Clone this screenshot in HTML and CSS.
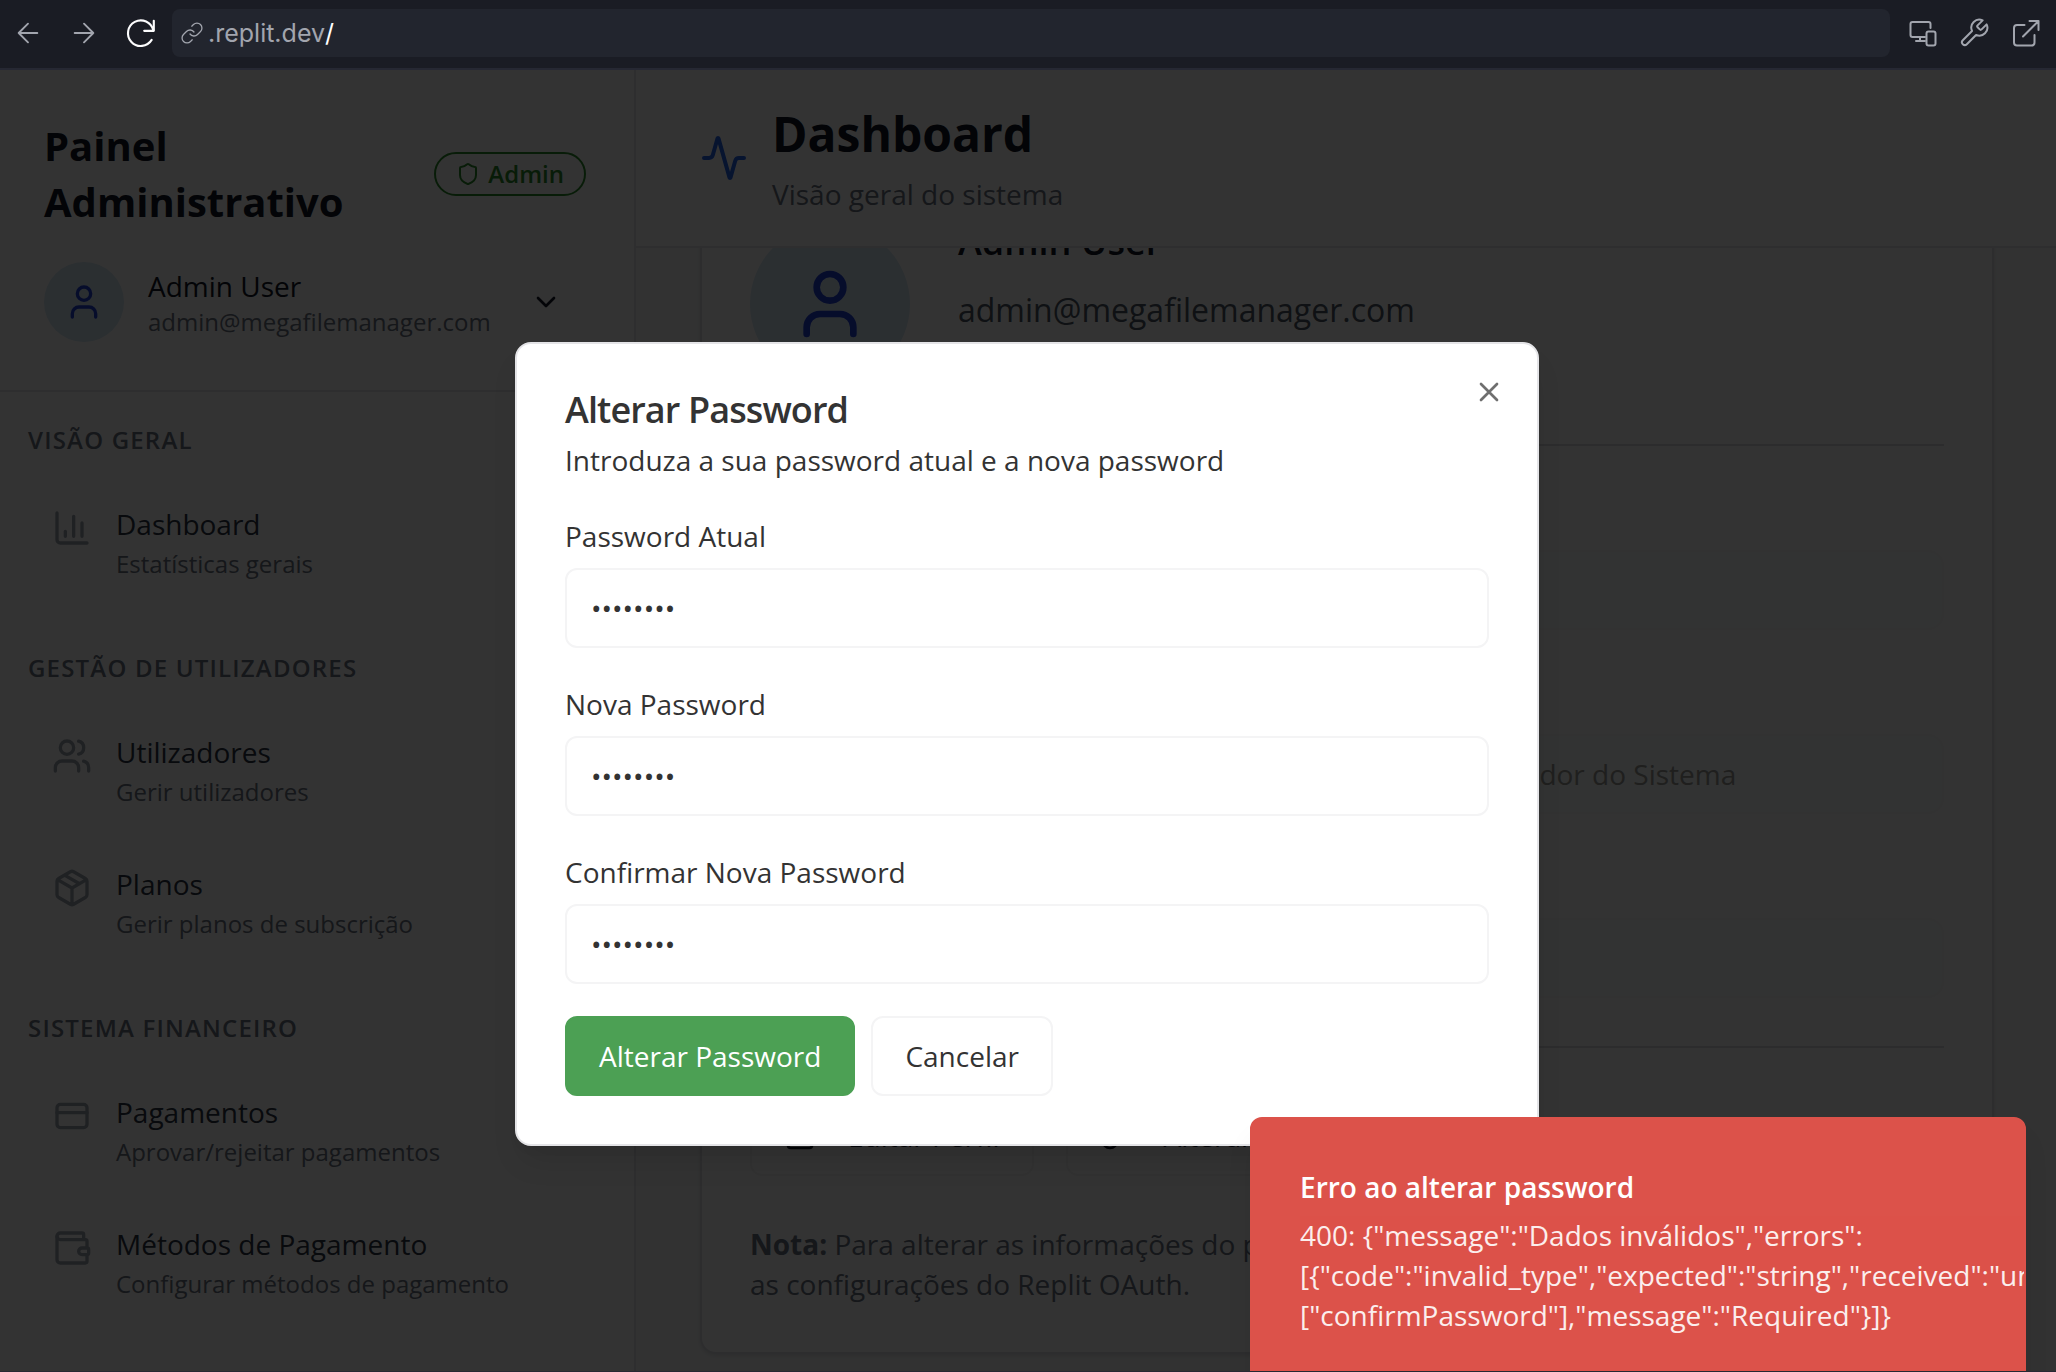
FILE: index.html
```html
<!DOCTYPE html>
<html lang="pt">
<head>
<meta charset="utf-8">
<title>Painel Administrativo</title>
<link rel="stylesheet" href="styles.css">
</head>
<body>
<div class="browser">
  <div class="toolbar">
    <button class="tool" aria-label="Voltar"><svg viewBox="0 0 24 24" class="tool-icon"><path d="M20 12H4M12 4l-8 8 8 8"/></svg></button>
    <button class="tool" aria-label="Avançar"><svg viewBox="0 0 24 24" class="tool-icon"><path d="M4 12h16M12 4l8 8-8 8"/></svg></button>
    <button class="tool tool-reload" aria-label="Recarregar"><svg viewBox="0 0 30 30" class="tool-icon reload-icon"><path d="M27 3.500v9.500h-9"/><path d="M26.500 12.500A12 12 0 1 0 25 21.500"/></svg></button>
    <label class="address">
      <svg viewBox="0 0 24 24" class="link-icon"><path d="M10 13a5 5 0 0 0 7.540.540l3-3a5 5 0 0 0-7.070-7.070l-1.720 1.710"/><path d="M14 11a5 5 0 0 0-7.540-.540l-3 3a5 5 0 0 0 7.070 7.070l1.710-1.710"/></svg>
      <span class="host">.replit.dev</span>
      <input class="path" type="text" value="/" aria-label="Caminho">
    </label>
    <div class="tools-end">
      <button class="tool" aria-label="Dispositivos"><svg viewBox="0 0 32 32" class="tool-icon end-icon"><path d="M24.500 11V7a2 2 0 0 0-2-2h-16a2 2 0 0 0-2 2v11a2 2 0 0 0 2 2h12.500M14 20v4M10 24h9"/><rect x="20.500" y="14.500" width="9" height="14" rx="2"/></svg></button>
      <button class="tool" aria-label="Ferramentas"><svg viewBox="0 0 24 24" class="tool-icon end-icon wrench"><path d="M14.700 6.300a1 1 0 0 0 0 1.400l1.600 1.600a1 1 0 0 0 1.400 0l3.770-3.770a6 6 0 0 1-7.940 7.940l-6.910 6.910a2.120 2.120 0 0 1-3-3l6.910-6.910a6 6 0 0 1 7.940-7.940l-3.760 3.760z"/></svg></button>
      <button class="tool" aria-label="Abrir em nova aba"><svg viewBox="0 0 32 32" class="tool-icon end-icon"><path d="M14.500 8H7a3 3 0 0 0-3 3v14.500a3 3 0 0 0 3 3h14.500a3 3 0 0 0 3-3V18M13 19.500 28.500 4M19.500 4h9v9"/></svg></button>
    </div>
  </div>

  <div class="preview">
    <aside class="sidebar">
      <header class="side-head">
        <div class="brand">
          <h2 class="brand-name">Painel Administrativo</h2>
          <span class="badge"><svg viewBox="0 0 24 24" class="badge-icon"><path d="M20 13c0 5-3.500 7.500-7.660 8.950a1 1 0 0 1-.670-.010C7.500 20.500 4 18 4 13V6a1 1 0 0 1 1-1c2 0 4.500-1.200 6.240-2.720a1.170 1.170 0 0 1 1.520 0C14.510 3.810 17 5 19 5a1 1 0 0 1 1 1z"/></svg>Admin</span>
        </div>
        <button class="account">
          <span class="avatar"><svg viewBox="0 0 24 24" class="avatar-icon"><path d="M19 21v-2a4 4 0 0 0-4-4H9a4 4 0 0 0-4 4v2"/><circle cx="12" cy="7" r="4"/></svg></span>
          <span class="account-text"><span class="account-name">Admin User</span><span class="account-mail">admin@megafilemanager.com</span></span>
          <svg viewBox="0 0 24 24" class="chevron"><path d="m6 9 6 6 6-6"/></svg>
        </button>
      </header>
      <nav class="nav">
        <section class="nav-group">
          <h3 class="nav-label">VISÃO GERAL</h3>
          <a class="nav-item" href="#dashboard">
            <svg viewBox="0 0 24 24" class="nav-icon"><path d="M3 3v16a2 2 0 0 0 2 2h16M18 17V9M13 17V5M8 17v-3"/></svg>
            <span class="nav-text"><span class="nav-title">Dashboard</span><span class="nav-sub">Estatísticas gerais</span></span>
          </a>
        </section>
        <section class="nav-group">
          <h3 class="nav-label">GESTÃO DE UTILIZADORES</h3>
          <a class="nav-item" href="#utilizadores">
            <svg viewBox="0 0 24 24" class="nav-icon"><path d="M16 21v-2a4 4 0 0 0-4-4H6a4 4 0 0 0-4 4v2"/><circle cx="9" cy="7" r="4"/><path d="M22 21v-2a4 4 0 0 0-3-3.870M16 3.130a4 4 0 0 1 0 7.750"/></svg>
            <span class="nav-text"><span class="nav-title">Utilizadores</span><span class="nav-sub">Gerir utilizadores</span></span>
          </a>
          <a class="nav-item" href="#planos">
            <svg viewBox="0 0 24 24" class="nav-icon"><path d="M11 21.730a2 2 0 0 0 2 0l7-4A2 2 0 0 0 21 16V8a2 2 0 0 0-1-1.730l-7-4a2 2 0 0 0-2 0l-7 4A2 2 0 0 0 3 8v8a2 2 0 0 0 1 1.730zM12 22V12M3.300 7 12 12l8.700-5M7.500 4.270l9 5.150"/></svg>
            <span class="nav-text"><span class="nav-title">Planos</span><span class="nav-sub">Gerir planos de subscrição</span></span>
          </a>
        </section>
        <section class="nav-group">
          <h3 class="nav-label">SISTEMA FINANCEIRO</h3>
          <a class="nav-item" href="#pagamentos">
            <svg viewBox="0 0 24 24" class="nav-icon"><rect x="3" y="5" width="18" height="14" rx="2"/><path d="M3 10h18"/></svg>
            <span class="nav-text"><span class="nav-title">Pagamentos</span><span class="nav-sub">Aprovar/rejeitar pagamentos</span></span>
          </a>
          <a class="nav-item" href="#metodos">
            <svg viewBox="0 0 24 24" class="nav-icon"><path d="M19 7V4a1 1 0 0 0-1-1H5a2 2 0 0 0 0 4h15a1 1 0 0 1 1 1v4h-3a2 2 0 0 0 0 4h3a1 1 0 0 0 1-1v-2a1 1 0 0 0-1-1"/><path d="M3 5v14a2 2 0 0 0 2 2h15a1 1 0 0 0 1-1v-4"/></svg>
            <span class="nav-text"><span class="nav-title">Métodos de Pagamento</span><span class="nav-sub">Configurar métodos de pagamento</span></span>
          </a>
        </section>
      </nav>
    </aside>

    <main class="main">
      <header class="page-head">
        <svg viewBox="0 0 24 24" class="page-icon"><path d="M22 12h-2.480a2 2 0 0 0-1.930 1.460l-2.350 8.360a.250.250 0 0 1-.480 0L9.240 2.180a.250.250 0 0 0-.480 0l-2.350 8.360A2 2 0 0 1 4.490 12H2"/></svg>
        <div>
          <h1 class="page-title">Dashboard</h1>
          <p class="page-sub">Visão geral do sistema</p>
        </div>
      </header>
      <div class="content">
        <section class="card">
          <div class="profile">
            <span class="avatar avatar-large"><svg viewBox="0 0 24 24" class="avatar-icon"><path d="M19 21v-2a4 4 0 0 0-4-4H9a4 4 0 0 0-4 4v2"/><circle cx="12" cy="7" r="4"/></svg></span>
            <div class="profile-text">
              <h3 class="profile-name">Admin User</h3>
              <p class="profile-mail">admin@megafilemanager.com</p>
            </div>
          </div>
          <hr class="rule">
          <div class="details">
            <div class="readonly"></div>
            <div class="readonly">Administrador do Sistema</div>
            <div class="readonly"></div>
          </div>
          <hr class="rule">
          <div class="actions">
            <button class="button button-icon"><svg viewBox="0 0 24 24" class="button-glyph"><path d="M12 3H5a2 2 0 0 0-2 2v14a2 2 0 0 0 2 2h14a2 2 0 0 0 2-2v-7"/><path d="M18.380 2.620a2.120 2.120 0 0 1 3 3l-9.010 9.010-4.370 1.370 1.370-4.370z"/></svg>Editar Perfil</button>
            <button class="button button-icon"><svg viewBox="0 0 24 24" class="button-glyph"><path d="m15.500 7.500 2.300 2.300a1 1 0 0 0 1.400 0l2.100-2.100a1 1 0 0 0 0-1.400L19 4M21 2l-9.600 9.600"/><circle cx="7.500" cy="15.500" r="5.500"/></svg>Alterar Password</button>
          </div>
          <p class="note"><strong>Nota:</strong> Para alterar as informações do perfil, aceda<br>as configurações do Replit OAuth.</p>
        </section>
      </div>
    </main>

    <div class="overlay">
      <form class="modal" role="dialog" aria-labelledby="modal-title">
        <button class="close" type="button" aria-label="Fechar"><svg viewBox="0 0 24 24" class="close-icon"><path d="M18 6 6 18M6 6l12 12"/></svg></button>
        <header class="modal-head">
          <h2 class="modal-title" id="modal-title">Alterar Password</h2>
          <p class="modal-sub">Introduza a sua password atual e a nova password</p>
        </header>
        <div class="fields">
          <div class="field"><label for="current">Password Atual</label><input id="current" type="password" value="abcd1234"></div>
          <div class="field"><label for="new">Nova Password</label><input id="new" type="password" value="abcd1234"></div>
          <div class="field"><label for="confirm">Confirmar Nova Password</label><input id="confirm" type="password" value="abcd1234"></div>
        </div>
        <div class="modal-actions">
          <button class="button button-primary" type="button">Alterar Password</button>
          <button class="button" type="button">Cancelar</button>
        </div>
      </form>
      <div class="toast" role="alert">
        <p class="toast-title">Erro ao alterar password</p>
        <p class="toast-text">400: {"message":"Dados inválidos","errors":[{"code":"invalid_type","expected":"string","received":"undefined","path":["confirmPassword"],"message":"Required"}]}</p>
      </div>
    </div>
  </div>
</div>
</body>
</html>
```
FILE: styles.css
```css
* { box-sizing: border-box; }

body {
  margin: 0;
  font-family: "Open Sans", "Noto Sans", sans-serif;
  font-size: 28px;
  line-height: 40px;
  color: #0f1424;
}

h1, h2, h3, p { margin: 0; }

button, input { font: inherit; color: inherit; }

button { cursor: pointer; }

svg {
  flex: none;
  fill: none;
  stroke: currentColor;
  stroke-width: 2;
  stroke-linecap: round;
  stroke-linejoin: round;
}

.browser {
  display: flex;
  flex-direction: column;
  height: 100vh;
  overflow: hidden;
  background: #1a1c24;
}

/* Browser toolbar */
.toolbar {
  display: flex;
  flex: none;
  align-items: center;
  height: 70px;
  padding: 0 4px 2px 0;
  border-bottom: 2px solid #262833;
  color: #a2a5ae;
}

.tool {
  display: flex;
  flex: none;
  align-items: center;
  justify-content: center;
  width: 56px;
  height: 48px;
  padding: 0;
  border: 0;
  background: none;
}

.tool-icon { width: 28px; height: 28px; stroke-width: 1.600; }
.tool-reload { width: 60px; padding-right: 2px; color: #fcfcfd; }
.reload-icon { width: 32px; height: 32px; stroke-width: 2; }

.address {
  display: flex;
  flex: 1;
  align-items: center;
  height: 48px;
  padding: 0 8px;
  border-radius: 8px;
  background: #22252e;
  font-family: "Inter", sans-serif;
  font-size: 25px;
}

.link-icon { width: 24px; height: 24px; margin-right: 4px; stroke-width: 1.300; }

.path {
  flex: 1;
  min-width: 0;
  padding: 0;
  border: 0;
  outline: 0;
  background: none;
  color: #fff;
}

.tools-end { display: flex; padding-left: 6px; }
.tools-end .tool { width: 52px; }
.end-icon { width: 32px; height: 32px; stroke-width: 2; }
.wrench { stroke-width: 1.500; }

/* Previewed page */
.preview {
  position: relative;
  display: flex;
  flex: 1;
  min-height: 0;
  overflow: hidden;
  background: #fff;
  border-bottom: 1px solid #262833;
}

.sidebar {
  flex: none;
  width: 636px;
  border-right: 2px solid #e5e7eb;
}

.side-head {
  display: flex;
  flex-direction: column;
  gap: 32px;
  padding: 48px 48px 48px 44px;
  border-bottom: 2px solid #e5e7eb;
}

.brand {
  display: flex;
  align-items: center;
  justify-content: space-between;
}

.brand-name {
  width: min-content;
  font-size: 40px;
  line-height: 56px;
}

.badge {
  display: flex;
  align-items: center;
  gap: 8px;
  padding: 4px 20px;
  border: 2px solid #2b8a2b;
  border-radius: 22px;
  color: #2b8a2b;
  font-size: 24px;
  font-weight: 600;
  line-height: 32px;
}

.badge-icon { width: 24px; height: 24px; }

.account {
  display: flex;
  align-items: center;
  gap: 24px;
  padding: 0 24px 0 0;
  border: 0;
  background: none;
  text-align: left;
}

.avatar {
  display: flex;
  flex: none;
  align-items: center;
  justify-content: center;
  width: 80px;
  height: 80px;
  border-radius: 50%;
  background: #d6e8f5;
  color: #2040d8;
}

.avatar-icon { width: 40px; height: 40px; }

.account-text { display: flex; flex: 1; flex-direction: column; }
.account-name { font-weight: 500; }
.account-mail { color: #6b7280; font-size: 24px; line-height: 32px; }
.chevron { width: 32px; height: 32px; }

.nav {
  display: flex;
  flex-direction: column;
  gap: 48px;
  padding: 32px 28px;
}

.nav-label {
  margin-bottom: 16px;
  color: #6b7280;
  font-size: 24px;
  font-weight: 600;
  line-height: 32px;
  letter-spacing: 0.050em;
}

.nav-group { display: flex; flex-direction: column; gap: 8px; }

.nav-item {
  display: flex;
  gap: 24px;
  padding: 24px;
  color: #2c3344;
  text-decoration: none;
}

.nav-icon { width: 40px; height: 40px; margin-top: 4px; color: #9ca3af; }
.nav-text { display: flex; flex-direction: column; gap: 4px; }
.nav-title { font-weight: 500; }
.nav-sub { color: #6b7280; font-size: 24px; line-height: 32px; }

.main {
  display: flex;
  flex: 1;
  flex-direction: column;
  min-width: 0;
}

.page-head {
  display: flex;
  flex: none;
  align-items: center;
  gap: 24px;
  padding: 32px 64px;
  border-bottom: 2px solid #e5e7eb;
}

.page-icon { width: 48px; height: 48px; color: #2563eb; }
.page-title { margin-bottom: 8px; font-size: 48px; line-height: 64px; }
.page-sub { color: #6b7280; }

.content {
  flex: 1;
  min-height: 0;
  padding: 0 62px 0 64px;
  overflow: hidden;
  background: #f9fafb;
}

/* The content pane is scrolled part of the way down the card */
.card {
  display: flex;
  flex-direction: column;
  gap: 48px;
  margin-top: -86px;
  padding: 48px;
  border: 2px solid #dfe1e5;
  border-radius: 16px;
  background: #fff;
  box-shadow: 0 2px 4px rgba(0, 0, 0, 0.100);
}

.profile {
  display: flex;
  align-items: center;
  gap: 48px;
}

.profile-text { min-height: 184px; padding-top: 2px; }
.avatar-large { width: 160px; height: 160px; }
.avatar-large .avatar-icon { width: 80px; height: 80px; }

.profile-name { margin-bottom: 16px; font-size: 36px; font-weight: 600; line-height: 56px; }
.profile-mail { color: #4b5563; font-size: 32px; line-height: 48px; }

.rule { width: 100%; height: 2px; margin: 0; border: 0; background: #d9dbdf; }

.details {
  display: grid;
  grid-template-columns: 1fr 1fr;
  gap: 104px 48px;
  padding-top: 56px;
}

.readonly {
  grid-column: 2;
  height: 80px;
  padding: 18px 24px;
  border: 2px solid #f7f7f7;
  border-radius: 16px;
  background: #fafffc;
  color: #9a9a96;
}

.actions { display: flex; gap: 32px; }

.button {
  display: flex;
  align-items: center;
  height: 80px;
  padding: 0 32px;
  border: 2px solid #f4f4f5;
  border-radius: 12px;
  background: none;
  font-weight: 500;
}

.button-icon { gap: 32px; }
.button-glyph { width: 32px; height: 32px; }

.note { color: #6b7280; }

/* Dialog layer */
.overlay {
  position: absolute;
  inset: 0 -2px -46px -4px;
  display: grid;
  place-items: center;
  background: rgba(0, 0, 0, 0.800);
}

.modal {
  position: relative;
  width: 100%;
  max-width: 1024px;
  padding: 48px;
  border: 2px solid #e4e4e7;
  border-radius: 16px;
  background: #fff;
  box-shadow: 0 20px 30px -6px rgba(0, 0, 0, 0.100), 0 8px 12px -8px rgba(0, 0, 0, 0.100);
  color: #333;
}

.close {
  position: absolute;
  top: 32px;
  right: 32px;
  display: flex;
  padding: 0;
  border: 0;
  background: none;
  opacity: 0.700;
}

.close-icon { width: 32px; height: 32px; }

.modal-head { margin-bottom: 36px; }
.modal-title { margin-bottom: 12px; font-size: 36px; font-weight: 600; line-height: 36px; letter-spacing: -0.025em; }

.fields { display: flex; flex-direction: column; gap: 36px; }
.field { display: flex; flex-direction: column; gap: 12px; }
.field label { font-weight: 500; }

.field input {
  width: 100%;
  height: 80px;
  padding: 0 24px;
  border: 2px solid #f4f4f5;
  border-radius: 12px;
  background: #fff;
}

.modal-actions { display: flex; gap: 16px; margin-top: 32px; }

.button-primary { border-color: #4ca054; background: #4ca054; color: #fff; }

.toast {
  position: absolute;
  right: 32px;
  bottom: 32px;
  width: 776px;
  padding: 48px;
  border: 2px solid #dc524a;
  border-radius: 12px;
  background: #dc524a;
  box-shadow: 0 20px 30px -6px rgba(0, 0, 0, 0.100);
  color: #fff;
  overflow: hidden;
}

.toast-title { margin-bottom: 8px; font-weight: 600; }
.toast-text { opacity: 0.900; }
```
